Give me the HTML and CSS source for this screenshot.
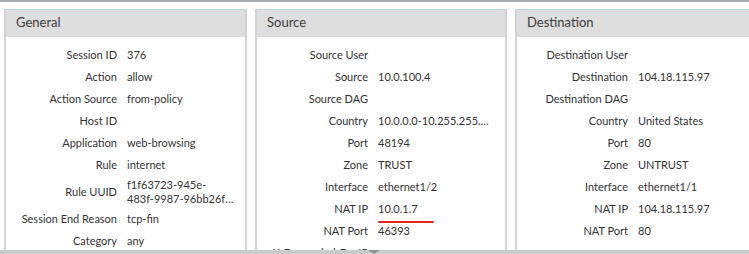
FILE: index.html
```html
<!DOCTYPE html>
<html>
<head>
<meta charset="utf-8">
<link rel="stylesheet" href="styles.css">
</head>
<body>
<div class="topbar"></div>
<div class="panels">
  <section class="card">
    <div class="card-head">General</div>
    <div class="rows">
      <div class="row"><span class="lbl">Session ID</span><span class="val">376</span></div>
      <div class="row"><span class="lbl">Action</span><span class="val">allow</span></div>
      <div class="row"><span class="lbl">Action Source</span><span class="val">from-policy</span></div>
      <div class="row"><span class="lbl">Host ID</span><span class="val"></span></div>
      <div class="row"><span class="lbl">Application</span><span class="val">web-browsing</span></div>
      <div class="row"><span class="lbl">Rule</span><span class="val">internet</span></div>
      <div class="row"><span class="lbl">Rule UUID</span><span class="val"><span class="line">f1f63723-945e-</span><span class="line ellip">483f-9987-96bb26f0a1c2e4</span></span></div>
      <div class="row"><span class="lbl">Session End Reason</span><span class="val">tcp-fin</span></div>
      <div class="row"><span class="lbl">Category</span><span class="val">any</span></div>
    </div>
  </section>
  <section class="card">
    <div class="card-head">Source</div>
    <div class="rows">
      <div class="row"><span class="lbl">Source User</span><span class="val"></span></div>
      <div class="row"><span class="lbl">Source</span><span class="val">10.0.100.4</span></div>
      <div class="row"><span class="lbl">Source DAG</span><span class="val"></span></div>
      <div class="row"><span class="lbl">Country</span><span class="val ellip tight">10.0.0.0-10.255.255.255</span></div>
      <div class="row"><span class="lbl">Port</span><span class="val">48194</span></div>
      <div class="row"><span class="lbl">Zone</span><span class="val">TRUST</span></div>
      <div class="row"><span class="lbl">Interface</span><span class="val">ethernet1/2</span></div>
      <div class="row"><span class="lbl">NAT IP</span><span class="val marked">10.0.1.7</span></div>
      <div class="row"><span class="lbl">NAT Port</span><span class="val">46393</span></div>
      <div class="row"><span class="lbl">X-Forwarded-For IP</span><span class="val"></span></div>
    </div>
  </section>
  <section class="card">
    <div class="card-head">Destination</div>
    <div class="rows">
      <div class="row"><span class="lbl">Destination User</span><span class="val"></span></div>
      <div class="row"><span class="lbl">Destination</span><span class="val">104.18.115.97</span></div>
      <div class="row"><span class="lbl">Destination DAG</span><span class="val"></span></div>
      <div class="row"><span class="lbl">Country</span><span class="val">United States</span></div>
      <div class="row"><span class="lbl">Port</span><span class="val">80</span></div>
      <div class="row"><span class="lbl">Zone</span><span class="val">UNTRUST</span></div>
      <div class="row"><span class="lbl">Interface</span><span class="val">ethernet1/1</span></div>
      <div class="row"><span class="lbl">NAT IP</span><span class="val">104.18.115.97</span></div>
      <div class="row"><span class="lbl">NAT Port</span><span class="val">80</span></div>
    </div>
  </section>
</div>
<div class="bottombar"><span class="arrow"></span></div>
</body>
</html>
```

FILE: styles.css
```css
html, body {
  margin: 0;
  padding: 0;
  width: 749px;
  height: 254px;
  overflow: hidden;
  background: #fff;
  font-family: Lato, "Open Sans", sans-serif;
  color: #333;
}

.topbar {
  height: 2px;
  background: #a7abae;
}

.panels {
  display: grid;
  grid-template-columns: 243px 252px 252px;
  column-gap: 8px;
  padding: 7px 0 0 4px;
  height: 241px;
  overflow: hidden;
}

.card {
  border: 2px solid #d3d3d3;
  border-top: 1px solid #b4d6de;
  border-bottom: none;
  background: #fff;
  overflow: hidden;
}

.card-head {
  background: #dedede;
  height: 27px;
  line-height: 25px;
  padding-left: 10px;
  font-size: 13px;
  color: #3c3c3c;
}

.rows {
  padding-top: 7px;
}

.row {
  display: grid;
  grid-template-columns: 111px 1fr;
  column-gap: 10px;
  align-items: center;
  min-height: 22px;
  padding: 2px 0;
  box-sizing: border-box;
  font-size: 11px;
  line-height: 14px;
}

.lbl {
  text-align: right;
  color: #333;
  white-space: nowrap;
}

.val {
  color: #333;
  min-width: 0;
  padding-right: 9px;
}

.val.tight {
  padding-right: 13px;
}

.line {
  display: block;
}

.ellip {
  white-space: nowrap;
  overflow: hidden;
  text-overflow: ellipsis;
}

.marked {
  position: relative;
}

.marked::after {
  content: "";
  position: absolute;
  left: 0;
  top: 19px;
  width: 56px;
  height: 2px;
  background: #e3262a;
  border-radius: 1px;
}

.bottombar {
  height: 4px;
  background: #c9cbcd;
  position: relative;
}

.arrow {
  position: absolute;
  left: 368px;
  top: 0;
  width: 0;
  height: 0;
  border-left: 6px solid transparent;
  border-right: 6px solid transparent;
  border-top: 4px solid #8e9194;
}
```
